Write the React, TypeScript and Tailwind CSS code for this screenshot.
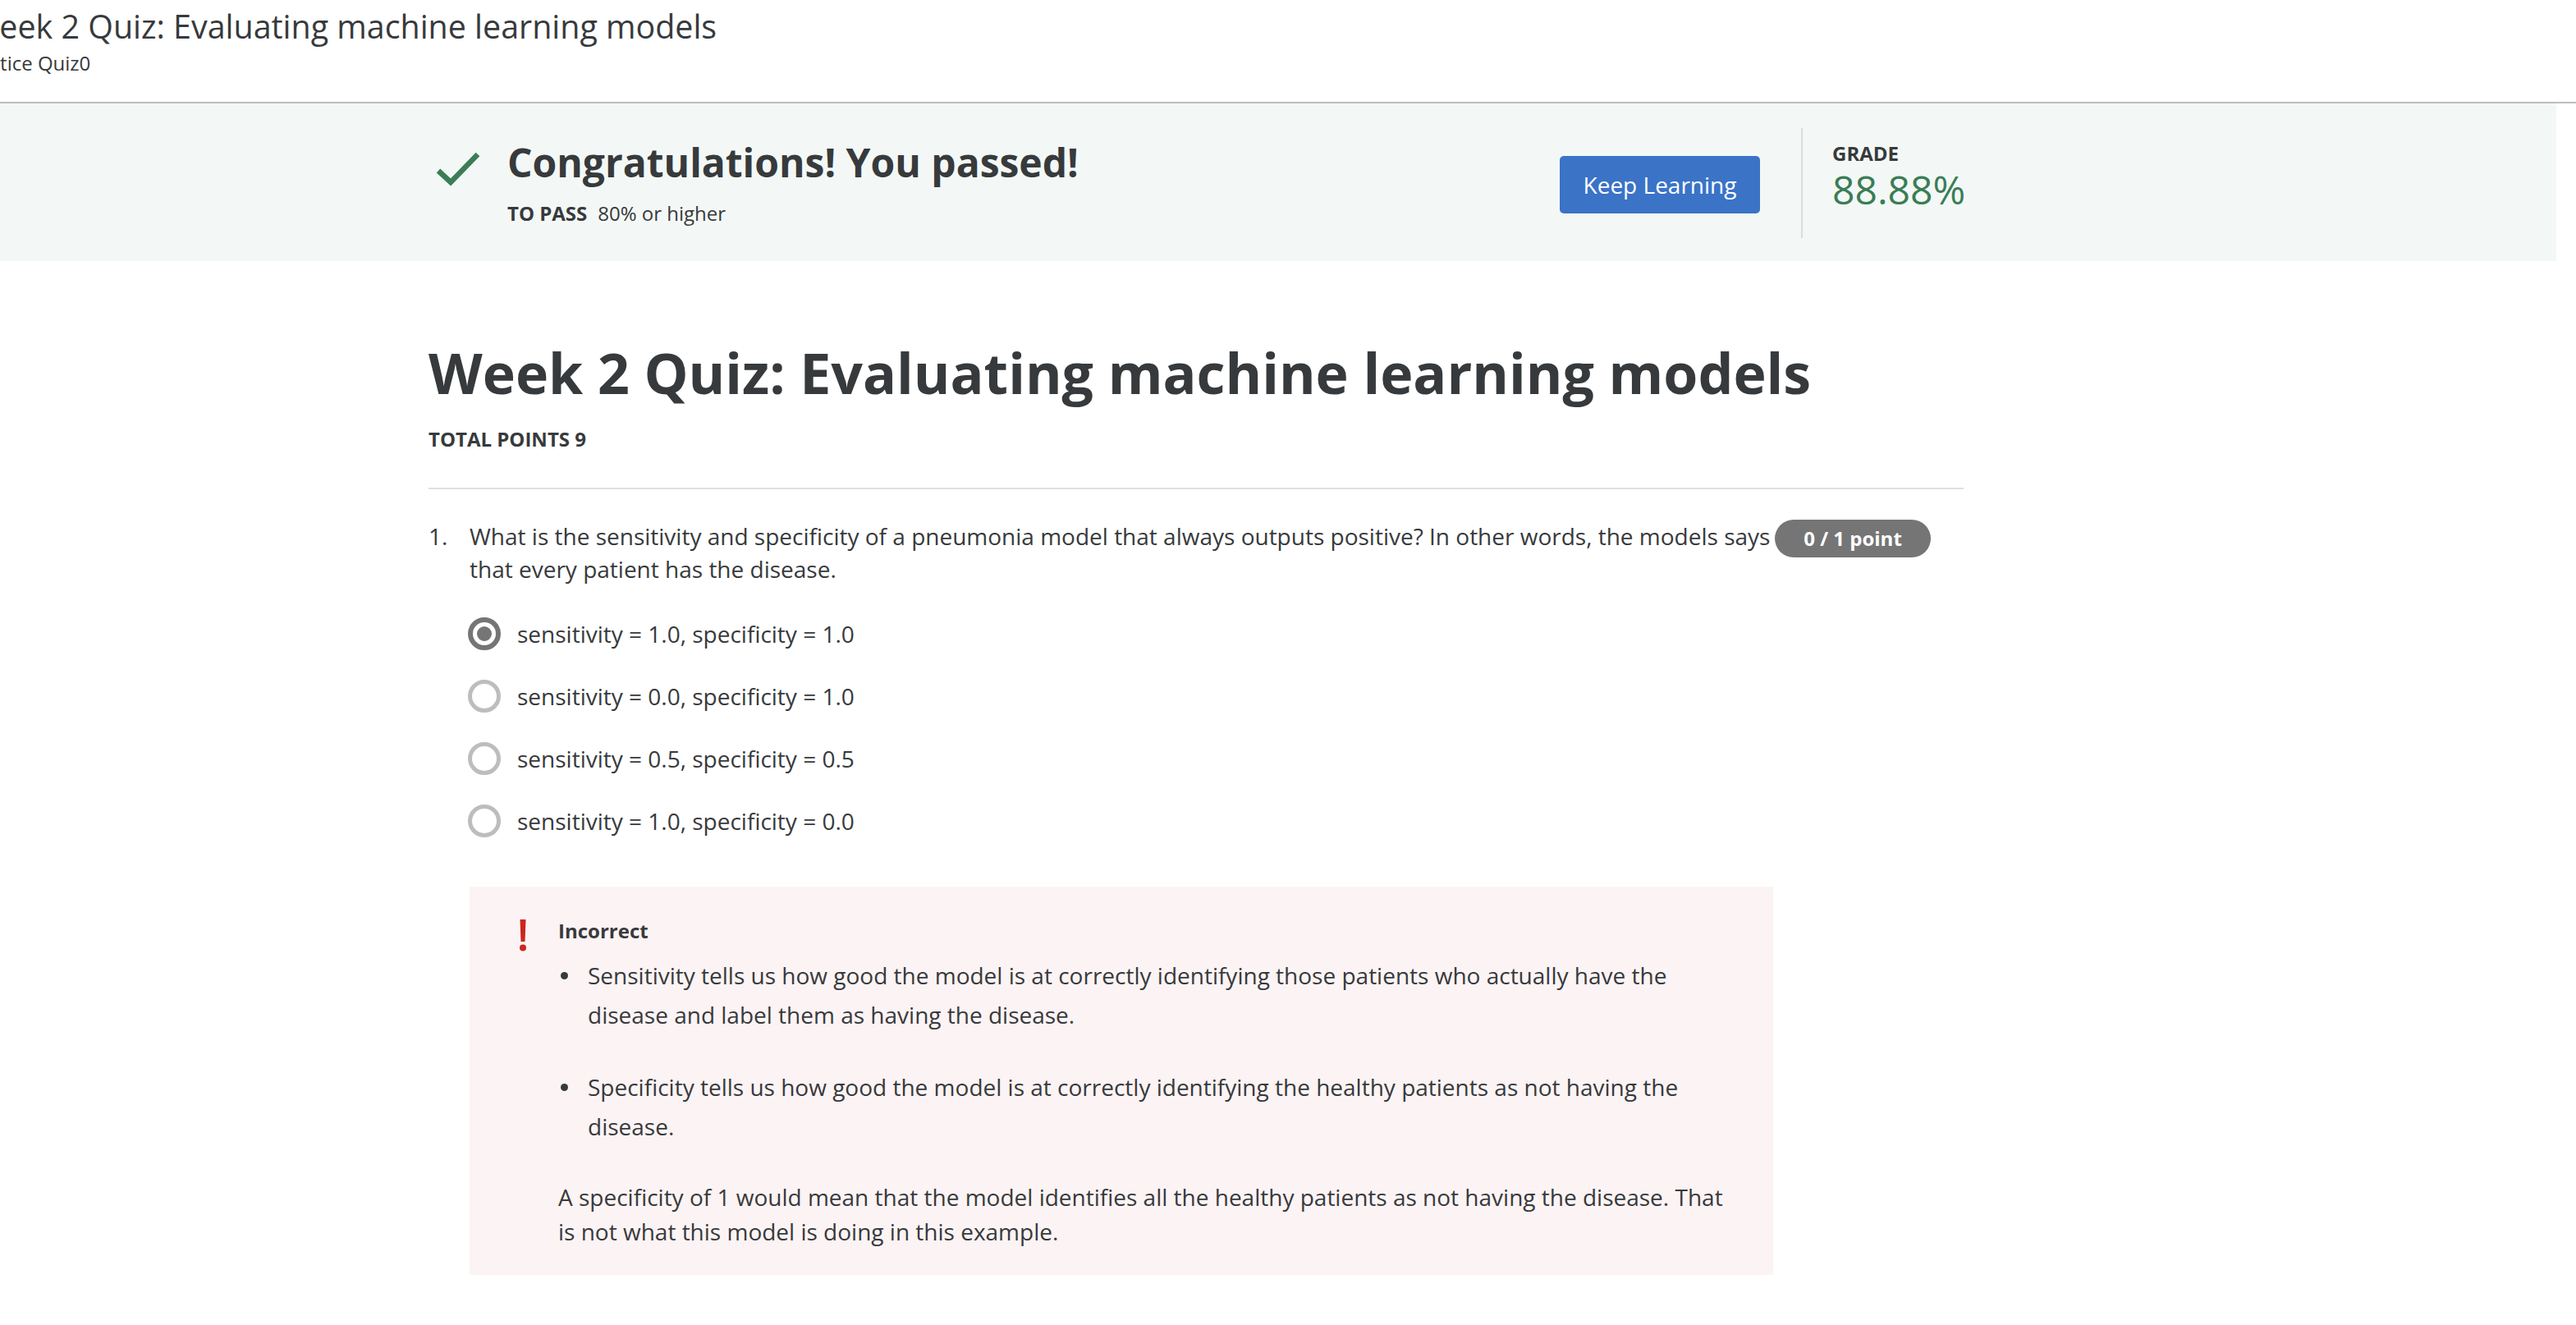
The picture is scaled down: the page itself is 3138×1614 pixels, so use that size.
import React from "react";

{/*DATA*/}
const options = [
  { label: "sensitivity = 1.0, specificity = 1.0", selected: true },
  { label: "sensitivity = 0.0, specificity = 1.0", selected: false },
  { label: "sensitivity = 0.5, specificity = 0.5", selected: false },
  { label: "sensitivity = 1.0, specificity = 0.0", selected: false },
];

const explanations = [
  "Sensitivity tells us how good the model is at correctly identifying those patients who actually have the disease and label them as having the disease.",
  "Specificity tells us how good the model is at correctly identifying the healthy patients as not having the disease.",
];

{/*PIECES*/}
function Radio({ selected }: { selected: boolean }) {
  if (selected) {
    return (
      <span className="flex h-[40px] w-[40px] shrink-0 items-center justify-center rounded-full border-[6px] border-[#757575]">
        <span className="h-[18px] w-[18px] rounded-full bg-[#757575]" />
      </span>
    );
  }
  return <span className="h-[40px] w-[40px] shrink-0 rounded-full border-[5px] border-[#bdbdbd]" />;
}

{/*COMPONENT*/}
export default function App() {
  return (
    <div className="min-h-screen w-full overflow-hidden bg-white font-['Open_Sans',sans-serif] text-[#373a3c]">
      <div className="h-[126px] border-b-2 border-[#bdbdbd] pt-[8px]">
        <div className="ml-[-37px] whitespace-nowrap text-[39.4px] leading-[48px]">
          Week 2 Quiz: Evaluating machine learning models
        </div>
        <div className="mt-[5px] ml-[-49px] whitespace-nowrap text-[24px] leading-[32px]">
          Practice Quiz0
        </div>
      </div>

      {/* PASSED BANNER */}
      <div className="h-[192px] w-[3114px] bg-[#f3f8f6]">
        <div className="ml-[522px] flex w-[1870px] items-start">
          <svg className="ml-[8px] mt-[56px] shrink-0" width="56" height="46" viewBox="0 0 56 46">
            <polyline points="4,26 19,40 52,6" fill="none" stroke="#3a7d56" strokeWidth="6.5" />
          </svg>
          <div className="ml-[32px] mt-[44px] flex-1">
            <div className="text-[48px] font-bold leading-[56px]">Congratulations! You passed!</div>
            <div className="mt-[18px] text-[24px] leading-[32px]">
              <span className="font-bold">TO PASS</span>
              <span className="ml-[13px]">80% or higher</span>
            </div>
          </div>
          <button
            type="button"
            className="mt-[64px] h-[70px] w-[244px] shrink-0 rounded-[5px] bg-[#3b73c7] text-[28px] text-white"
          >
            Keep Learning
          </button>
          <div className="ml-[50px] mt-[30px] h-[134px] w-[2px] bg-[#dcdcdc]" />
          <div className="ml-[36px] mt-[45px] w-[160px]">
            <div className="text-[24px] font-bold leading-[32px]">GRADE</div>
            <div className="text-[48px] leading-[56px] text-[#3a7d56]">88.88%</div>
          </div>
        </div>
      </div>

      {/* QUIZ */}
      <div className="ml-[522px] w-[1870px] pb-[60px]">
        <h1 className="mt-[96px] text-[68px] font-bold leading-[80px]">
          Week 2 Quiz: Evaluating machine learning models
        </h1>
        <div className="mt-[25px] text-[24px] font-bold leading-[32px]">TOTAL POINTS 9</div>
        <div className="mt-[43px] h-[2px] bg-[#e0e0e0]" />

        {/* QUESTION 1 */}
        <div className="mt-[37px] flex items-start text-[28px] leading-[40px]">
          <span className="w-[50px] shrink-0">1.</span>
          <p className="flex-1">
            What is the sensitivity and specificity of a pneumonia model that always outputs positive? In other
            words, the models says that every patient has the disease.
          </p>
          <span className="mr-[40px] flex h-[46px] w-[190px] shrink-0 items-center justify-center rounded-full bg-[#757575] text-[24px] font-bold text-white">
            0 / 1 point
          </span>
        </div>

        <div className="ml-[48px] mt-[39px] flex flex-col gap-[36px]">
          {options.map((o) => (
            <label key={o.label} className="flex h-[40px] items-center gap-[20px] text-[28px]">
              <Radio selected={o.selected} />
              <span>{o.label}</span>
            </label>
          ))}
        </div>

        {/* FEEDBACK */}
        <div className="ml-[50px] mt-[60px] flex w-[1588px] bg-[#fcf3f4] pb-[32px] pl-[60px] pr-[50px] pt-[38px]">
          <div className="w-[48px] shrink-0 pt-[2px]">
            <svg width="10" height="40" viewBox="0 0 10 40">
              <path d="M1.5 0 H8.5 L7.5 27 H2.5 Z" fill="#c9271f" />
              <circle cx="5" cy="34.5" r="4" fill="#c9271f" />
            </svg>
          </div>
          <div className="flex-1">
            <div className="text-[24px] font-bold leading-[32px]">Incorrect</div>
            <ul className="mt-[14px] flex flex-col gap-[40px]">
              {explanations.map((t) => (
                <li key={t} className="flex text-[28px] leading-[48px]">
                  <span className="flex h-[48px] w-[36px] shrink-0 items-center">
                    <span className="ml-[3px] h-[9px] w-[9px] rounded-full bg-[#373a3c]" />
                  </span>
                  <span>{t}</span>
                </li>
              ))}
            </ul>
            <p className="mt-[41px] text-[28px] leading-[42px]">
              A specificity of 1 would mean that the model identifies all the healthy patients as not having the
              disease. That is not what this model is doing in this example.
            </p>
          </div>
        </div>
      </div>
    </div>
  );
}
